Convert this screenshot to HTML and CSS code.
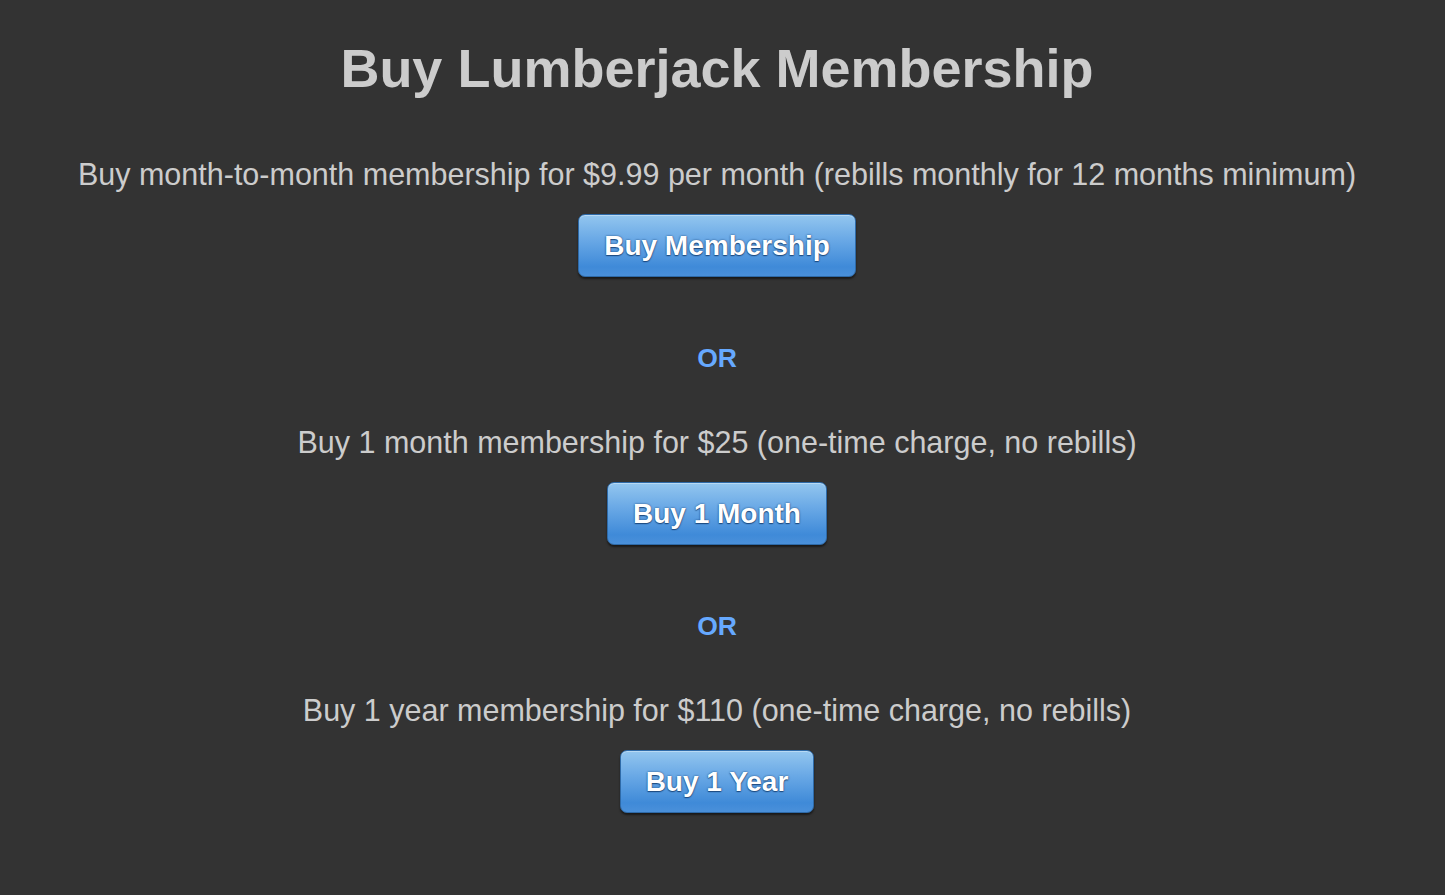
FILE: index.html
```html
<!DOCTYPE html>
<html>
<head>
<meta charset="utf-8">
<link rel="stylesheet" href="styles.css">
</head>
<body>
<main class="page">
  <h1 class="title">Buy Lumberjack Membership</h1>
  <section class="option">
    <p class="desc">Buy month-to-month membership for $9.99 per month (rebills monthly for 12 months minimum)</p>
    <button class="btn">Buy Membership</button>
  </section>
  <p class="or">OR</p>
  <section class="option">
    <p class="desc">Buy 1 month membership for $25 (one-time charge, no rebills)</p>
    <button class="btn">Buy 1 Month</button>
  </section>
  <p class="or">OR</p>
  <section class="option">
    <p class="desc">Buy 1 year membership for $110 (one-time charge, no rebills)</p>
    <button class="btn">Buy 1 Year</button>
  </section>
</main>
</body>
</html>
```
FILE: styles.css
```css
html, body {
  margin: 0;
  padding: 0;
  background: #333333;
  height: 100%;
}
body {
  font-family: "Liberation Sans", Arial, Helvetica, sans-serif;
  color: #cccccc;
}
.page {
  display: flex;
  flex-direction: column;
  align-items: center;
  padding: 36px 11px 0 0;
}
.title {
  margin: 0 0 56px;
  font-size: 54px;
  line-height: 64px;
  font-weight: bold;
  color: #cccccc;
}
.option {
  display: flex;
  flex-direction: column;
  align-items: center;
  gap: 22px;
}
.desc {
  margin: 0;
  font-size: 30.5px;
  line-height: 36px;
}
.btn {
  font-family: "Liberation Sans", Arial, Helvetica, sans-serif;
  font-size: 28px;
  font-weight: bold;
  color: #ffffff;
  text-shadow: 0 0 2px rgba(20, 60, 110, 0.9), 0 1px 1px rgba(20, 60, 110, 0.8);
  background: linear-gradient(to bottom, #93c6ef 0%, #6aa9e6 40%, #3f8ad8 85%, #4a90da 100%);
  border: 1px solid #2e6aa8;
  border-radius: 7px;
  box-shadow: inset 0 1px 0 rgba(255,255,255,0.35), 0 2px 2px rgba(0,0,0,0.5);
  height: 63px;
  padding: 0 25px;
  cursor: pointer;
}
.or {
  margin: 66px 0 51px;
  font-size: 26.5px;
  line-height: 30px;
  font-weight: bold;
  color: #66a9ff;
}
```
